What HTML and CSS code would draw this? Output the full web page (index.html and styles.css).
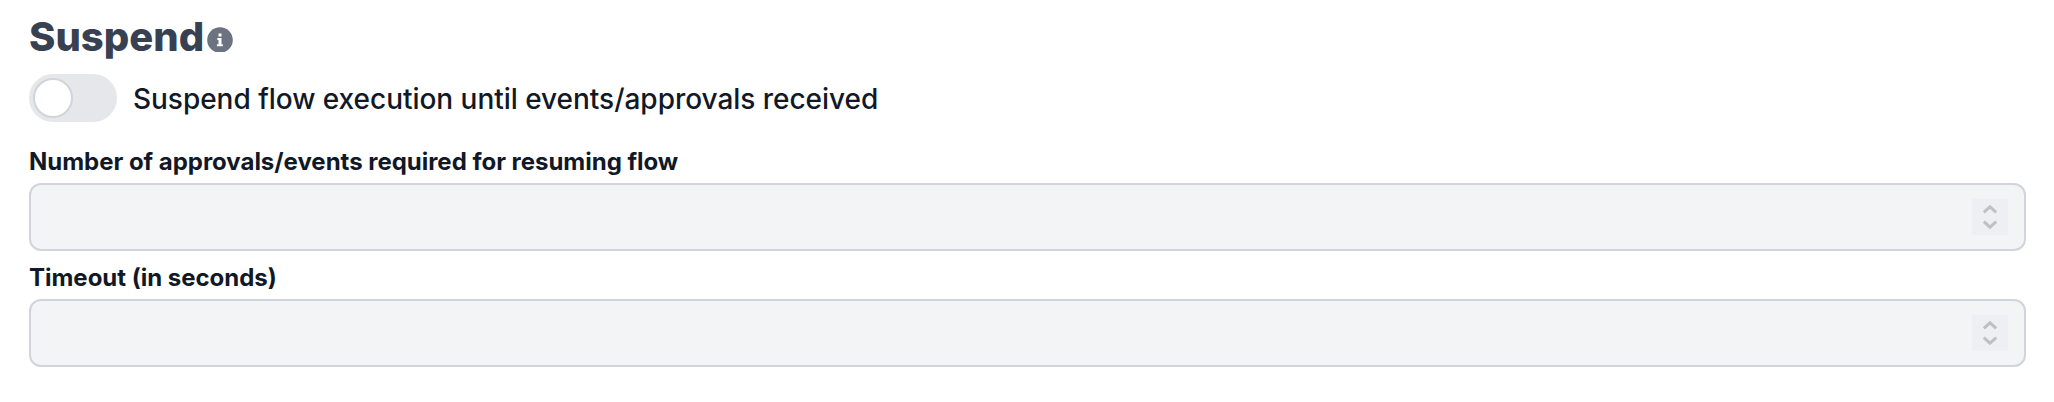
FILE: index.html
```html
<!DOCTYPE html>
<html lang="en">
<head>
<meta charset="utf-8">
<title>Suspend</title>
<link rel="stylesheet" href="styles.css">
</head>
<body>
<main class="panel">
  <h2 class="title"><span class="title-text">Suspend</span><svg class="info" viewBox="0 0 26 25"><circle class="info-disc" cx="13" cy="13" r="12.8"/><path class="info-mark" d="M11.5 6.4h3v3.1h-3zM10.3 11h4.2v6.2h1.3v2h-5.9v-2h1.6V13h-1.2z"/></svg></h2>
  <div class="toggle-row">
    <span class="toggle" role="switch" aria-checked="false"><span class="knob"></span></span>
    <span class="toggle-label">Suspend flow execution until events/approvals received</span>
  </div>
  <div class="field">
    <label class="label" for="approvals">Number of approvals/events required for resuming flow</label>
    <div class="control">
      <input class="input" id="approvals" disabled>
      <svg class="spinner" viewBox="0 0 36 36"><path d="M11.8 13.3l6.2-5.5 6.2 5.5M11.8 22.7l6.2 5.5 6.2-5.5"/></svg>
    </div>
  </div>
  <div class="field">
    <label class="label" for="timeout">Timeout (in seconds)</label>
    <div class="control">
      <input class="input" id="timeout" disabled>
      <svg class="spinner" viewBox="0 0 36 36"><path d="M11.8 13.3l6.2-5.5 6.2 5.5M11.8 22.7l6.2 5.5 6.2-5.5"/></svg>
    </div>
  </div>
</main>
</body>
</html>
```
FILE: styles.css
```css
* { box-sizing: border-box; }
body {
  margin: 0;
  background: #fff;
  color: #111827;
  font-family: Inter, sans-serif;
}
.panel { padding: 12px 28px 0 29px; }
.title {
  display: flex;
  align-items: center;
  gap: 4px;
  height: 50px;
  margin: 0 0 12px;
  color: #374151;
  font-size: 40px;
  font-weight: 800;
  line-height: 50px;
}
.title-text { width: 174px; white-space: nowrap; }
.info { width: 26px; height: 25px; margin-top: 5px; }
.info-disc { fill: #6b7280; }
.info-mark { fill: #fff; }
.toggle-row {
  display: flex;
  align-items: center;
  gap: 16px;
  height: 48px;
  margin-bottom: 23px;
}
.toggle {
  width: 88px;
  height: 48px;
  padding: 4px;
  border-radius: 24px;
  background: #e5e7eb;
}
.knob {
  display: block;
  width: 40px;
  height: 40px;
  border: 2px solid #d1d5db;
  border-radius: 50%;
  background: #fff;
}
.toggle-label {
  padding-top: 2px;
  font-size: 28px;
  font-weight: 500;
  letter-spacing: -0.03px;
}
.field { margin-bottom: 10px; }
.label {
  display: block;
  height: 38px;
  padding-top: 1px;
  font-size: 24px;
  font-weight: 700;
  letter-spacing: -0.02px;
  line-height: 32px;
}
.control {
  display: flex;
  align-items: center;
  height: 68px;
  padding: 0 16px;
  border: 2px solid #d1d5db;
  border-radius: 12px;
  background: #f3f4f6;
}
.input {
  flex: 1;
  min-width: 0;
  height: 100%;
  padding: 0;
  border: 0;
  background: transparent;
  font: inherit;
}
.spinner { width: 36px; height: 36px; background: #eeeff3; }
.spinner path { fill: none; stroke: #bfc0c5; stroke-width: 3; }
```
